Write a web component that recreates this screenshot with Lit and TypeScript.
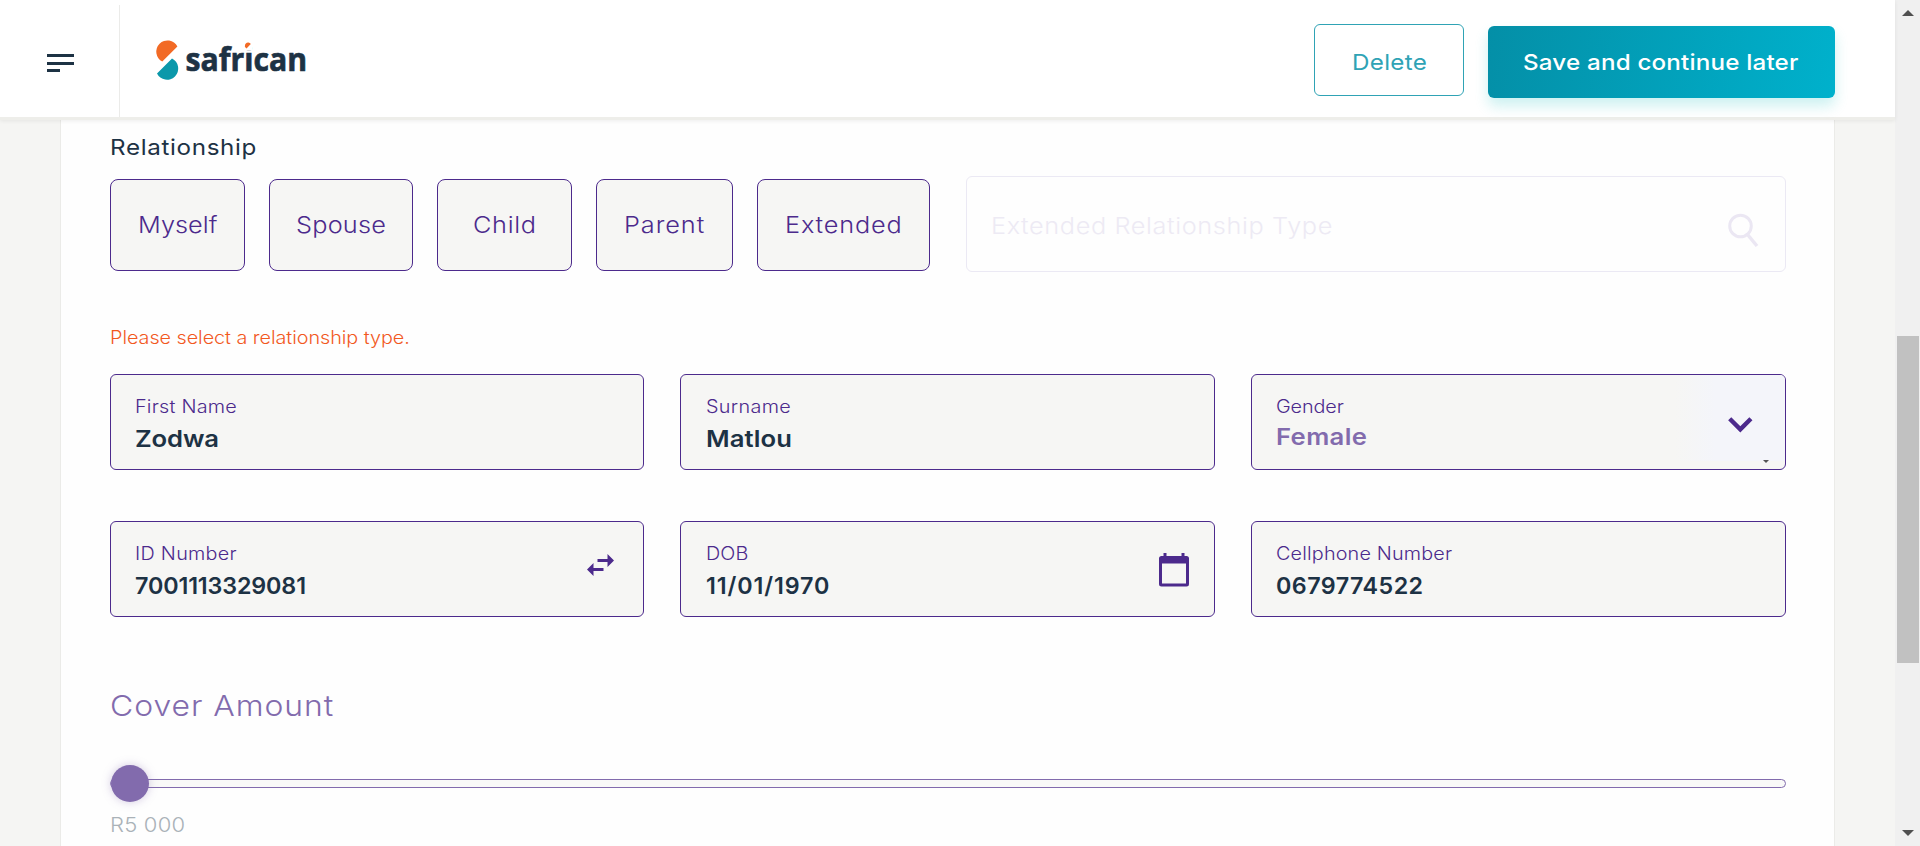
import { LitElement, html, css, nothing } from "lit";

const relationships = [
  { label: "Myself", width: 135, pad: 27, track: 0.03 },
  { label: "Spouse", width: 144, pad: 26, track: 0.2 },
  { label: "Child", width: 135, pad: 35, track: 0.6 },
  { label: "Parent", width: 137, pad: 27, track: 0.85 },
  { label: "Extended", width: 173, pad: 27, track: 0.75 },
];

const fields = [
  { label: "First Name", lt: 0.2, value: "Zodwa", vt: -0.1, icon: "" },
  { label: "Surname", lt: 0.3, value: "Matlou", vt: 0.1, icon: "" },
  { label: "Gender", lt: -0.1, value: "Female", vt: 0.35, icon: "select" },
  { label: "ID Number", lt: 0.25, value: "7001113329081", vt: -0.13, icon: "swap" },
  { label: "DOB", lt: 0.1, value: "11/01/1970", vt: 0.9, icon: "calendar" },
  { label: "Cellphone Number", lt: 0.15, value: "0679774522", vt: 0.45, icon: "" },
];

const icons: Record<string, unknown> = {
  swap: html`<svg class="swap" width="27" height="23" viewBox="0 0 27 23">
    <path fill="#4c2a8c" d="M10.500 5H20.500V0L27 6.500L20.500 13V8H10.500Z M0 15.500L6.500 9V14H16.500V17H6.500V22Z" />
  </svg>`,
  calendar: html`<svg class="calendar" width="30" height="34" viewBox="0 0 30 34">
    <path fill="#4c2a8c" fill-rule="evenodd" d="M4.500 0H7.500V3H22.500V0H25.500V3H27.500Q30 3 30 5.500V31Q30 33.500 27.500 33.500H2.500Q0 33.500 0 31V5.500Q0 3 2.500 3H4.500Z M3 10.500V30.500H27V10.500Z" />
  </svg>`,
  select: html`<div class="drop">
    <svg class="chevron" width="25" height="16" viewBox="0 0 25 16"><path d="M1.700 1.800L12.300 12.400L22.900 1.800" fill="none" stroke="#4c2a8c" stroke-width="4.400" /></svg>
    <svg class="caret" width="6" height="3" viewBox="0 0 6 3"><path d="M0 0H6L3 3Z" fill="#555" /></svg>
  </div>`,
};

class AppRoot extends LitElement {
  static styles = css`
    :host { display: block; width: 1920px; height: 846px; overflow: hidden; font-family: Inter, "Open Sans", sans-serif; color: #1d3244; background: #f5f5f3; }
    * { box-sizing: border-box; }
    .wide { display: inline-block; transform: scaleX(1.1); transform-origin: 0 50%; }
    .shell { display: flex; height: 846px; }
    .page { width: 1895px; display: flex; flex-direction: column; }
    .header { height: 120px; flex: none; display: flex; background: #fff; border-bottom: 3px solid #eeeeea; box-shadow: 0 1px 4px rgba(0, 0, 0, .07); z-index: 1; }
    .menu { width: 120px; margin-top: 5px; border-right: 1px solid #ebebe9; padding: 49px 0 0 47px; }
    .menu svg, .logo svg { display: block; overflow: visible; }
    .logo { padding: 35px 0 0 29px; flex: 1; }
    .actions { display: flex; padding: 24px 60px 0 0; gap: 24px; }
    .btn { height: 72px; border-radius: 6px; font-size: 22px; white-space: nowrap; }
    .delete { width: 150px; border: 1px solid #2fa3b5; color: #2fa3b5; padding-left: 37px; letter-spacing: .26px; line-height: 74px; }
    .save { width: 347px; margin-top: 2px; padding-left: 35px; color: #fff; background: linear-gradient(100deg, #048fa7, #00b1cc); letter-spacing: .16px; line-height: 72px; font-weight: 500; box-shadow: 0 8px 14px rgba(0, 185, 185, .2); }
    .panel { width: 1775px; margin-left: 60px; flex: 1; background: #fefefe; border: solid #ebebe8; border-width: 0 1px; padding: 16px 48px 0 49px; }
    .title { font-size: 22px; line-height: 22px; letter-spacing: .6px; }
    .row { display: flex; align-items: center; height: 96px; margin-top: 18px; gap: 24px; }
    .choice { height: 92px; margin-top: 2px; border: 1px solid #4c2a8c; border-radius: 8px; background: #f6f6f4; color: #4c2a8c; font-size: 23px; font-weight: 300; line-height: 90px; white-space: nowrap; }
    .search { flex: 1; margin-left: 12px; height: 96px; border: 1px solid #ebe9f4; border-radius: 6px; display: flex; justify-content: space-between; padding: 0 26px 0 24px; font-size: 23px; font-weight: 300; line-height: 98px; letter-spacing: .55px; color: #edeaf4; }
    .search svg { margin-top: 36px; }
    .error { margin-top: 54px; height: 24px; line-height: 24px; font-size: 18px; font-weight: 300; letter-spacing: -.05px; color: #f2591e; }
    .grid { display: grid; grid-template-columns: 534px 535px 535px; grid-auto-rows: 96px; gap: 51px 36px; margin-top: 24px; }
    .field { display: flex; justify-content: space-between; border: 1px solid #4c2a8c; border-radius: 6px; background: #f6f6f4; overflow: hidden; padding-left: 24px; white-space: nowrap; }
    .field:nth-child(3n + 2) { padding-left: 25px; }
    .label { font-size: 18px; font-weight: 300; line-height: 20px; color: #4c2a8c; margin-top: 22px; }
    .value { font-size: 23.300px; font-weight: 600; line-height: 30px; margin-top: 7px; }
    .with-select .value { color: #826bad; margin-top: 5px; }
    .swap { margin: 32px 29px 0 0; }
    .calendar { margin: 31px 25px 0 0; }
    .drop { width: 110px; height: 86px; display: flex; flex-direction: column; background: linear-gradient(90deg, #f6f6f4, #f4f5fa 40px); }
    .chevron { margin: 42px 0 0 53px; }
    .caret { margin: 27px 0 0 88px; }
    .drop svg { flex: none; }
    .cover { margin-top: 68px; font-size: 29px; font-weight: 300; line-height: 41px; height: 40px; letter-spacing: .86px; color: #826bad; }
    .slider { display: flex; align-items: center; height: 37px; margin-top: 40px; }
    .thumb { width: 38px; height: 37px; border-radius: 50%; background: #826bad; box-shadow: 0 0 10px rgba(130, 107, 173, .35); z-index: 1; margin-left: 1px; }
    .track { flex: 1; height: 9px; margin-left: -39px; border: 1px solid #826bad; border-radius: 5px; background: #f9f9f8; }
    .min { margin-top: 11px; font-size: 20px; font-weight: 300; line-height: 24px; letter-spacing: .2px; color: #aab2b8; }
    .scroll { width: 25px; background: #f0f0f0; display: flex; flex-direction: column; align-items: center; padding: 10px 0; }
    .bar { width: 22px; height: 327px; margin: 320px 0 auto; background: #c1c1c1; }
  `;

  render() {
    return html`<div class="shell">
      <div class="page">
        <div class="header">
          <div class="menu"><svg width="27" height="18" viewBox="0 0 27 18"><path fill="#1d3244" d="M0 0H27V3H0ZM0 8H27V11H0ZM0 15H13V18H0Z" /></svg></div>
          <div class="logo"><svg width="170" height="60" viewBox="-1 0 170 60">
            <path fill="#f26a25" d="M12.300 26.600A11.200 11.200 0 1 1 27.400 11.500Z" />
            <path fill="#0b98aa" d="M22 23.500A11.200 11.200 0 1 1 7 38.500Z" />
            <text x="35.500" y="36" textLength="121.500" lengthAdjust="spacingAndGlyphs" font-family="Open Sans" font-weight="700" font-size="33" fill="#1d3244" stroke="#1d3244" stroke-width=".7">safrican</text>
            <path fill="#fff" d="M93.200 6H102V15.800H93.200Z" />
            <path fill="#f26a25" d="M96.500 13.500A3.200 3.200 0 1 1 100.800 9Z" />
          </svg></div>
          <div class="actions"><div class="btn delete"><span class="wide">Delete</span></div><div class="btn save"><span class="wide">Save and continue later</span></div></div>
        </div>
        <div class="panel">
          <div class="title"><span class="wide">Relationship</span></div>
          <div class="row">
            ${relationships.map((r) => html`<div class="choice" style="width:${r.width}px;padding-left:${r.pad}px;letter-spacing:${r.track}px"><span class="wide">${r.label}</span></div>`)}
            <div class="search"><span class="wide">Extended Relationship Type</span>
              <svg width="31" height="35" viewBox="0 0 31 35" fill="none" stroke="#ebe7f3"><circle cx="12.500" cy="13" r="10.800" stroke-width="3" /><path d="M19.500 21.500L29 33" stroke-width="3.500" /></svg>
            </div>
          </div>
          <div class="error"><span class="wide">Please select a relationship type.</span></div>
          <div class="grid">
            ${fields.map((f) => html`<div class="field ${f.icon ? `with-${f.icon}` : ""}">
              <div>
                <div class="label" style="letter-spacing:${f.lt}px"><span class="wide">${f.label}</span></div>
                <div class="value" style="letter-spacing:${f.vt}px"><span class=${/\d/.test(f.value) ? "digits" : "wide"}>${f.value}</span></div>
              </div>
              ${icons[f.icon] ?? nothing}
            </div>`)}
          </div>
          <div class="cover"><span class="wide">Cover Amount</span></div>
          <div class="slider"><div class="thumb"></div><div class="track"></div></div>
          <div class="min"><span class="wide">R5 000</span></div>
        </div>
      </div>
      <div class="scroll">
        <svg width="12" height="6" viewBox="0 0 12 6"><path d="M0 6L6 0L12 6Z" fill="#505050" /></svg>
        <div class="bar"></div>
        <svg width="12" height="6" viewBox="0 0 12 6"><path d="M0 0H12L6 6Z" fill="#505050" /></svg>
      </div>
    </div>`;
  }
}
customElements.define("app-root", AppRoot);
